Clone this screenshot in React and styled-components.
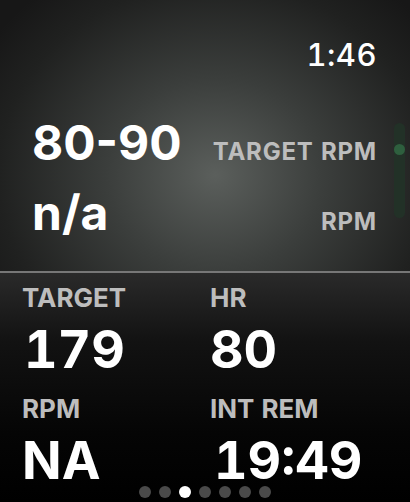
import React from 'react';
import styled, { createGlobalStyle } from 'styled-components';

const Global = createGlobalStyle`
  html, body {
    margin: 0;
    padding: 0;
    background: #000;
  }
  body {
    font-family: Inter, "Liberation Sans", sans-serif;
    font-variant-numeric: tabular-nums;
  }
`;

const Screen = styled.div`
  position: relative;
  width: 410px;
  height: 502px;
  overflow: hidden;
  background: #000;
  color: #fff;
`;

const Upper = styled.section`
  height: 271px;
  box-sizing: border-box;
  padding: 40px 33px 0 32px;
  background: radial-gradient(ellipse 270px 240px at 215px 175px, #5b5f5c 0%, #3b3e3c 40%, #202120 80%, #171717 100%);
`;

const Clock = styled.div`
  text-align: right;
  font-size: 31px;
  font-weight: 500;
  line-height: 30px;
  letter-spacing: 0.5px;
`;

const Reading = styled.div`
  display: flex;
  justify-content: space-between;
  align-items: baseline;
  margin-top: ${p => p.$gap}px;
`;

const BigValue = styled.span`
  font-size: 48px;
  font-weight: 700;
  line-height: 50px;
  font-variant-numeric: proportional-nums;
`;

const Unit = styled.span`
  font-size: 24px;
  font-weight: 700;
  letter-spacing: 0.8px;
  color: #bdbdbd;
`;

const Scroller = styled.div`
  position: absolute;
  left: 394px;
  top: 123px;
  width: 11px;
  height: 95px;
  border-radius: 6px;
  background: #223127;
`;

const ScrollKnob = styled.div`
  position: absolute;
  left: 0;
  top: 21px;
  width: 11px;
  height: 11px;
  border-radius: 50%;
  background: #2e5f3e;
`;

const Divider = styled.div`
  height: 2px;
  background: #777;
`;

const Lower = styled.section`
  height: 229px;
  box-sizing: border-box;
  padding: 9px 0 0 22px;
  display: grid;
  grid-template-columns: 188px 1fr;
  grid-auto-rows: min-content;
  row-gap: 11px;
  background: linear-gradient(180deg, #2a2a2a 0%, #121212 30%, #050505 70%, #000 100%);
`;

const Cell = styled.div`
  display: flex;
  flex-direction: column;
`;

const Label = styled.div`
  font-size: 26px;
  font-weight: 700;
  color: #bdbdbd;
  line-height: 32px;
`;

const Value = styled.div`
  margin-top: 4px;
  font-size: 52px;
  font-weight: 700;
  line-height: 64px;
  padding-left: ${p => p.$indent || 0}px;
`;

const Dots = styled.div`
  position: absolute;
  left: 0;
  right: 0;
  bottom: 4px;
  display: flex;
  justify-content: center;
  gap: 8px;
`;

const Dot = styled.span`
  width: 12px;
  height: 12px;
  border-radius: 50%;
  background: ${p => (p.$active ? '#fff' : '#4a4a4a')};
`;

const cells = [
  { label: 'TARGET', value: '179', indent: 2 },
  { label: 'HR', value: '80', indent: 0 },
  { label: 'RPM', value: 'NA', indent: 0 },
  { label: 'INT REM', value: '19:49', indent: 4 },
];

export default function App() {
  return (
    <Screen>
      <Global />
      <Upper>
        <Clock>1:46</Clock>
        <Reading $gap={48}>
          <BigValue>80-90</BigValue>
          <Unit>TARGET RPM</Unit>
        </Reading>
        <Reading $gap={20}>
          <BigValue>n/a</BigValue>
          <Unit>RPM</Unit>
        </Reading>
      </Upper>
      <Scroller>
        <ScrollKnob />
      </Scroller>
      <Divider />
      <Lower>
        {cells.map(c => (
          <Cell key={c.label}>
            <Label>{c.label}</Label>
            <Value $indent={c.indent}>{c.value}</Value>
          </Cell>
        ))}
      </Lower>
      <Dots>
        {[0, 1, 2, 3, 4, 5, 6].map(i => (
          <Dot key={i} $active={i === 2} />
        ))}
      </Dots>
    </Screen>
  );
}
